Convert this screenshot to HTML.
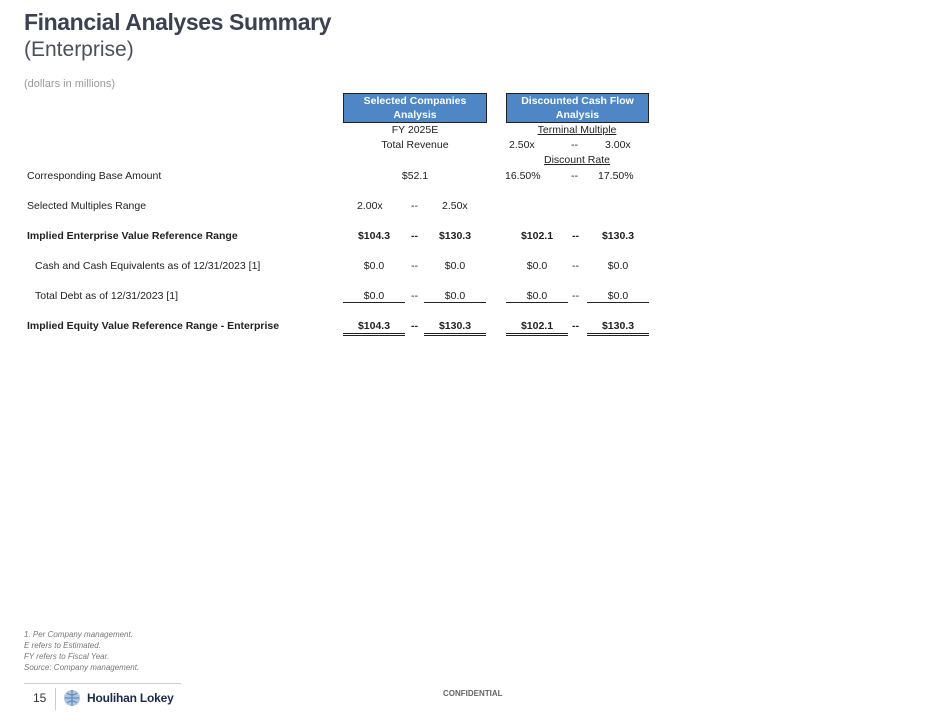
<!DOCTYPE html>
<html><head><meta charset="utf-8"><style>
body{margin:0;width:950px;height:713px;background:#fff;position:relative;font-family:"Liberation Sans",sans-serif;overflow:hidden;color:#222}
.a{position:absolute;white-space:nowrap;font-size:10.5px}
.c{text-align:center}
.b{font-weight:bold}
.box{position:absolute;top:93px;height:28px;background:#4f86c6;border:1px solid #222;color:#fff;font-weight:bold;font-size:10.5px;text-align:center;line-height:14px}
.u{border-bottom:1px solid #222}
.dd{border-bottom:3px double #222}
</style></head><body>
<div class="a b" style="left:24px;top:9px;font-size:23px;letter-spacing:-0.4px;color:#3b4150">Financial Analyses Summary</div>
<div class="a" style="left:24px;top:38px;font-size:21px;color:#4a4f5c">(Enterprise)</div>
<div class="a" style="left:24px;top:78px;font-size:11px;color:#9a9a9a">(dollars in millions)</div>

<div class="box" style="left:343px;width:142px">Selected Companies<br>Analysis</div>
<div class="box" style="left:506px;width:141px">Discounted Cash Flow<br>Analysis</div>

<div class="a c" style="left:343px;width:144px;top:124px">FY 2025E</div>
<div class="a c" style="left:343px;width:144px;top:139px">Total Revenue</div>
<div class="a c" style="left:506px;width:142px;top:124px"><span style="text-decoration:underline">Terminal Multiple</span></div>
<div class="a" style="left:509px;top:139px">2.50x</div><div class="a" style="left:571px;top:139px">--</div><div class="a" style="left:605px;top:139px">3.00x</div>
<div class="a c" style="left:506px;width:142px;top:154px"><span style="text-decoration:underline">Discount Rate</span></div>

<div class="a" style="left:27px;top:170px">Corresponding Base Amount</div>
<div class="a c" style="left:343px;width:144px;top:170px">$52.1</div>
<div class="a" style="left:505px;top:170px">16.50%</div><div class="a" style="left:571px;top:170px">--</div><div class="a" style="left:598px;top:170px">17.50%</div>

<div class="a" style="left:27px;top:200px">Selected Multiples Range</div>
<div class="a" style="left:357px;top:200px">2.00x</div><div class="a" style="left:411px;top:200px">--</div><div class="a" style="left:442px;top:200px">2.50x</div>

<div class="a b" style="left:27px;top:230px">Implied Enterprise Value Reference Range</div>
<div class="a b c" style="left:343px;width:62px;top:230px">$104.3</div><div class="a b" style="left:411px;top:230px">--</div><div class="a b c" style="left:424px;width:62px;top:230px">$130.3</div>
<div class="a b c" style="left:506px;width:62px;top:230px">$102.1</div><div class="a b" style="left:572px;top:230px">--</div><div class="a b c" style="left:587px;width:62px;top:230px">$130.3</div>

<div class="a" style="left:35px;top:260px">Cash and Cash Equivalents as of 12/31/2023 [1]</div>
<div class="a c" style="left:343px;width:62px;top:260px">$0.0</div><div class="a" style="left:411px;top:260px">--</div><div class="a c" style="left:424px;width:62px;top:260px">$0.0</div>
<div class="a c" style="left:506px;width:62px;top:260px">$0.0</div><div class="a" style="left:572px;top:260px">--</div><div class="a c" style="left:587px;width:62px;top:260px">$0.0</div>

<div class="a" style="left:35px;top:290px">Total Debt as of 12/31/2023 [1]</div>
<div class="a c u" style="left:343px;width:62px;top:290px;height:12px">$0.0</div><div class="a" style="left:411px;top:290px">--</div><div class="a c u" style="left:424px;width:62px;top:290px;height:12px">$0.0</div>
<div class="a c u" style="left:506px;width:62px;top:290px;height:12px">$0.0</div><div class="a" style="left:572px;top:290px">--</div><div class="a c u" style="left:587px;width:62px;top:290px;height:12px">$0.0</div>

<div class="a b" style="left:27px;top:320px">Implied Equity Value Reference Range - Enterprise</div>
<div class="a b c dd" style="left:343px;width:62px;top:320px;height:13px">$104.3</div><div class="a b" style="left:411px;top:320px">--</div><div class="a b c dd" style="left:424px;width:62px;top:320px;height:13px">$130.3</div>
<div class="a b c dd" style="left:506px;width:62px;top:320px;height:13px">$102.1</div><div class="a b" style="left:572px;top:320px">--</div><div class="a b c dd" style="left:587px;width:62px;top:320px;height:13px">$130.3</div>

<div class="a" style="left:24px;top:629px;font-size:8px;font-style:italic;color:#777;line-height:11px">1. Per Company management.<br>E refers to Estimated.<br>FY refers to Fiscal Year.<br>Source: Company management.</div>
<div style="position:absolute;left:24px;top:683px;width:157px;height:1px;background:#c8ccd4"></div>
<div class="a" style="left:33px;top:691px;font-size:12px;color:#333">15</div>
<div style="position:absolute;left:55px;top:688px;width:1px;height:22px;background:#c8ccd4"></div>
<svg style="position:absolute;left:63px;top:689px" width="18" height="18" viewBox="0 0 18 18"><circle cx="9" cy="9" r="8" fill="#aac4e4"/><path d="M2 9h14M9 1v16M4 4q5 4 10 0M4 14q5-4 10 0" stroke="#5d7fae" stroke-width="1" fill="none"/></svg>
<div class="a b" style="left:87px;top:691px;font-size:12px;letter-spacing:-0.2px;color:#1b2a4a">Houlihan Lokey</div>
<div class="a b" style="left:443px;top:689px;font-size:8px;color:#666">CONFIDENTIAL</div>
</body></html>
